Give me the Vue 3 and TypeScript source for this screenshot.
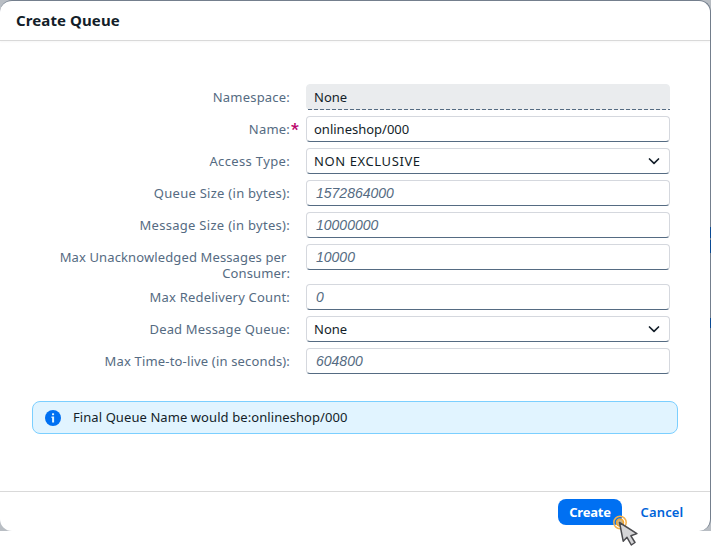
<script setup lang="ts">
interface Field {
  label: string
  value: string
  kind: 'readonly' | 'input' | 'select' | 'placeholder'
  spacing: string
  valueSpacing?: string
  required?: boolean
  tall?: boolean
}

const fields: Field[] = [
  { label: 'Namespace:', value: 'None', kind: 'readonly', spacing: '0.2px' },
  { label: 'Name:', value: 'onlineshop/000', kind: 'input', spacing: '0.2px', required: true },
  { label: 'Access Type:', value: 'NON EXCLUSIVE', kind: 'select', spacing: '0.35px', valueSpacing: '0.6px' },
  { label: 'Queue Size (in bytes):', value: '1572864000', kind: 'placeholder', spacing: '0.27px' },
  { label: 'Message Size (in bytes):', value: '10000000', kind: 'placeholder', spacing: '0.29px' },
  { label: 'Max Unacknowledged Messages per Consumer:', value: '10000', kind: 'placeholder', spacing: '0.12px', tall: true },
  { label: 'Max Redelivery Count:', value: '0', kind: 'placeholder', spacing: '0.19px' },
  { label: 'Dead Message Queue:', value: 'None', kind: 'select', spacing: '0.16px' },
  { label: 'Max Time-to-live (in seconds):', value: '604800', kind: 'placeholder', spacing: '0.17px' },
]
</script>

<template>
  <div class="page">
    <div class="backdrop">
      <section class="dialog">
        <header class="head">Create Queue</header>
        <main class="body">
          <div v-for="f in fields" :key="f.label" class="row" :class="{ tall: f.tall }">
            <div class="label" :style="{ letterSpacing: f.spacing }"><span>{{ f.label }}</span><span v-if="f.required" class="star">*</span></div>
            <div class="field" :class="f.kind">
              <span :style="{ letterSpacing: f.valueSpacing }">{{ f.value }}</span>
              <svg v-if="f.kind === 'readonly'" class="dash" width="362" height="1" viewBox="0 0 362 1">
                <path d="M0 .5H362" stroke="#556b82" stroke-dasharray="4 2" />
              </svg>
              <svg v-if="f.kind === 'select'" class="chevron" width="12" height="8" viewBox="0 0 12 8">
                <path d="M1.5 2 6 6.300l4.500-4.300" fill="none" stroke="#131e29" stroke-width="1.7" stroke-linecap="round" stroke-linejoin="round" />
              </svg>
            </div>
          </div>
          <div class="strip">
            <svg width="16" height="16" viewBox="0 0 16 16">
              <circle cx="8" cy="8" r="8" fill="#0070f2" />
              <path d="M6.500 6.500h2.600v6H7.100V8h-.6z" fill="#e1f4ff" />
              <rect x="7" y="3.200" width="2.100" height="2" rx=".6" fill="#e1f4ff" />
            </svg>
            <span class="message">Final Queue Name would be:onlineshop/000</span>
          </div>
        </main>
        <footer class="foot">
          <button class="create">Create</button>
          <button class="cancel">Cancel</button>
        </footer>
      </section>
    </div>
    <svg class="edge" width="1" height="104" viewBox="0 0 1 104">
      <path d="M.5 0v11M.5 13v13M.5 91v10" stroke="#0a4a94" />
    </svg>
    <svg class="cursor" width="30" height="34" viewBox="0 0 30 34">
      <circle cx="8" cy="10.500" r="6.200" fill="none" stroke="#f5b04a" stroke-width="1.500" />
      <circle cx="8" cy="10.500" r="3.500" fill="#c9b58a" stroke="#f5a52c" stroke-width="1.500" />
      <path d="M7.500 10.500 11.200 29.200l3.800-3.900 4.300 7.700 3.700-2.500-4.100-6.700 6-2.200z" fill="#d5d5d7" stroke="#4b4b4f" stroke-width="1.500" stroke-linejoin="round" />
    </svg>
  </div>
</template>

<style>
body {
  margin: 0;
  background: #fff;
}
</style>

<style scoped>
* {
  box-sizing: border-box;
}
.page {
  position: relative;
  width: 711px;
  height: 546px;
  overflow: hidden;
  background: #fff;
  font: 13px/16px "Noto Sans", "Liberation Sans", sans-serif;
  color: #131e29;
}
.backdrop {
  height: 531px;
  background: #b9bec4;
}
.dialog {
  display: flex;
  flex-direction: column;
  height: 531px;
  background: #fff;
  border-top: 1px solid #747f8d;
  border-right: 1px solid #747f8d;
  border-radius: 12px;
}
.head {
  height: 40px;
  flex: none;
  padding: 0 16px;
  border-bottom: 1px solid #d9d9d9;
  box-shadow: 0 1px 2px #0000000a;
  font-size: 15px;
  font-weight: 700;
  line-height: 39px;
  letter-spacing: 0.1px;
}
.body {
  flex: 1;
  padding: 43px 32px 0;
}
.row {
  display: flex;
  gap: 16px;
  height: 26px;
  margin-bottom: 6px;
}
.row.tall {
  height: 34px;
}
.label {
  position: relative;
  width: 258px;
  padding: 5px 0 0 20px;
  text-align: right;
  white-space: break-spaces;
  color: #556b82;
}
.star {
  position: absolute;
  right: -9px;
  top: 5px;
  font-family: Roboto, sans-serif;
  font-size: 17px;
  font-weight: 700;
  color: #ba066c;
}
.field {
  position: relative;
  display: flex;
  align-items: center;
  justify-content: space-between;
  width: 364px;
  height: 26px;
  padding: 0 9px 0 7px;
  border: 1px solid #d5d8de;
  border-bottom-color: #556b82;
  border-radius: 4px;
}
.field.readonly {
  background: #eaecee;
  border-color: #eaecee;
}
.dash {
  position: absolute;
  left: 1px;
  bottom: -1px;
}
.placeholder {
  padding-left: 9px;
  font-family: "Liberation Sans", Arial, sans-serif;
  font-size: 14px;
  font-style: italic;
  color: #556b82;
}
.strip {
  display: flex;
  align-items: center;
  gap: 12px;
  width: 646px;
  height: 33px;
  margin-top: 27px;
  padding-left: 12px;
  background: #e1f4ff;
  border: 1px solid #7bcfff;
  border-radius: 8px;
}
.message {
  padding-bottom: 2px;
  letter-spacing: 0.08px;
}
.foot {
  display: flex;
  justify-content: flex-end;
  height: 40px;
  flex: none;
  padding: 7px 16px 0;
  border-top: 1px solid #d9d9d9;
}
button {
  height: 26px;
  padding: 0;
  border: 0;
  border-radius: 8px;
  font: 700 13px/26px "Noto Sans", "Liberation Sans", sans-serif;
}
.create {
  width: 64px;
  color: #fff;
  background: #0070f2;
  letter-spacing: -0.2px;
}
.cancel {
  width: 64px;
  margin-left: 8px;
  color: #0064d9;
  background: transparent;
  font-weight: 600;
  letter-spacing: 0.15px;
}
.edge {
  position: absolute;
  left: 710px;
  top: 227px;
}
.cursor {
  position: absolute;
  left: 612px;
  top: 512px;
}
</style>
